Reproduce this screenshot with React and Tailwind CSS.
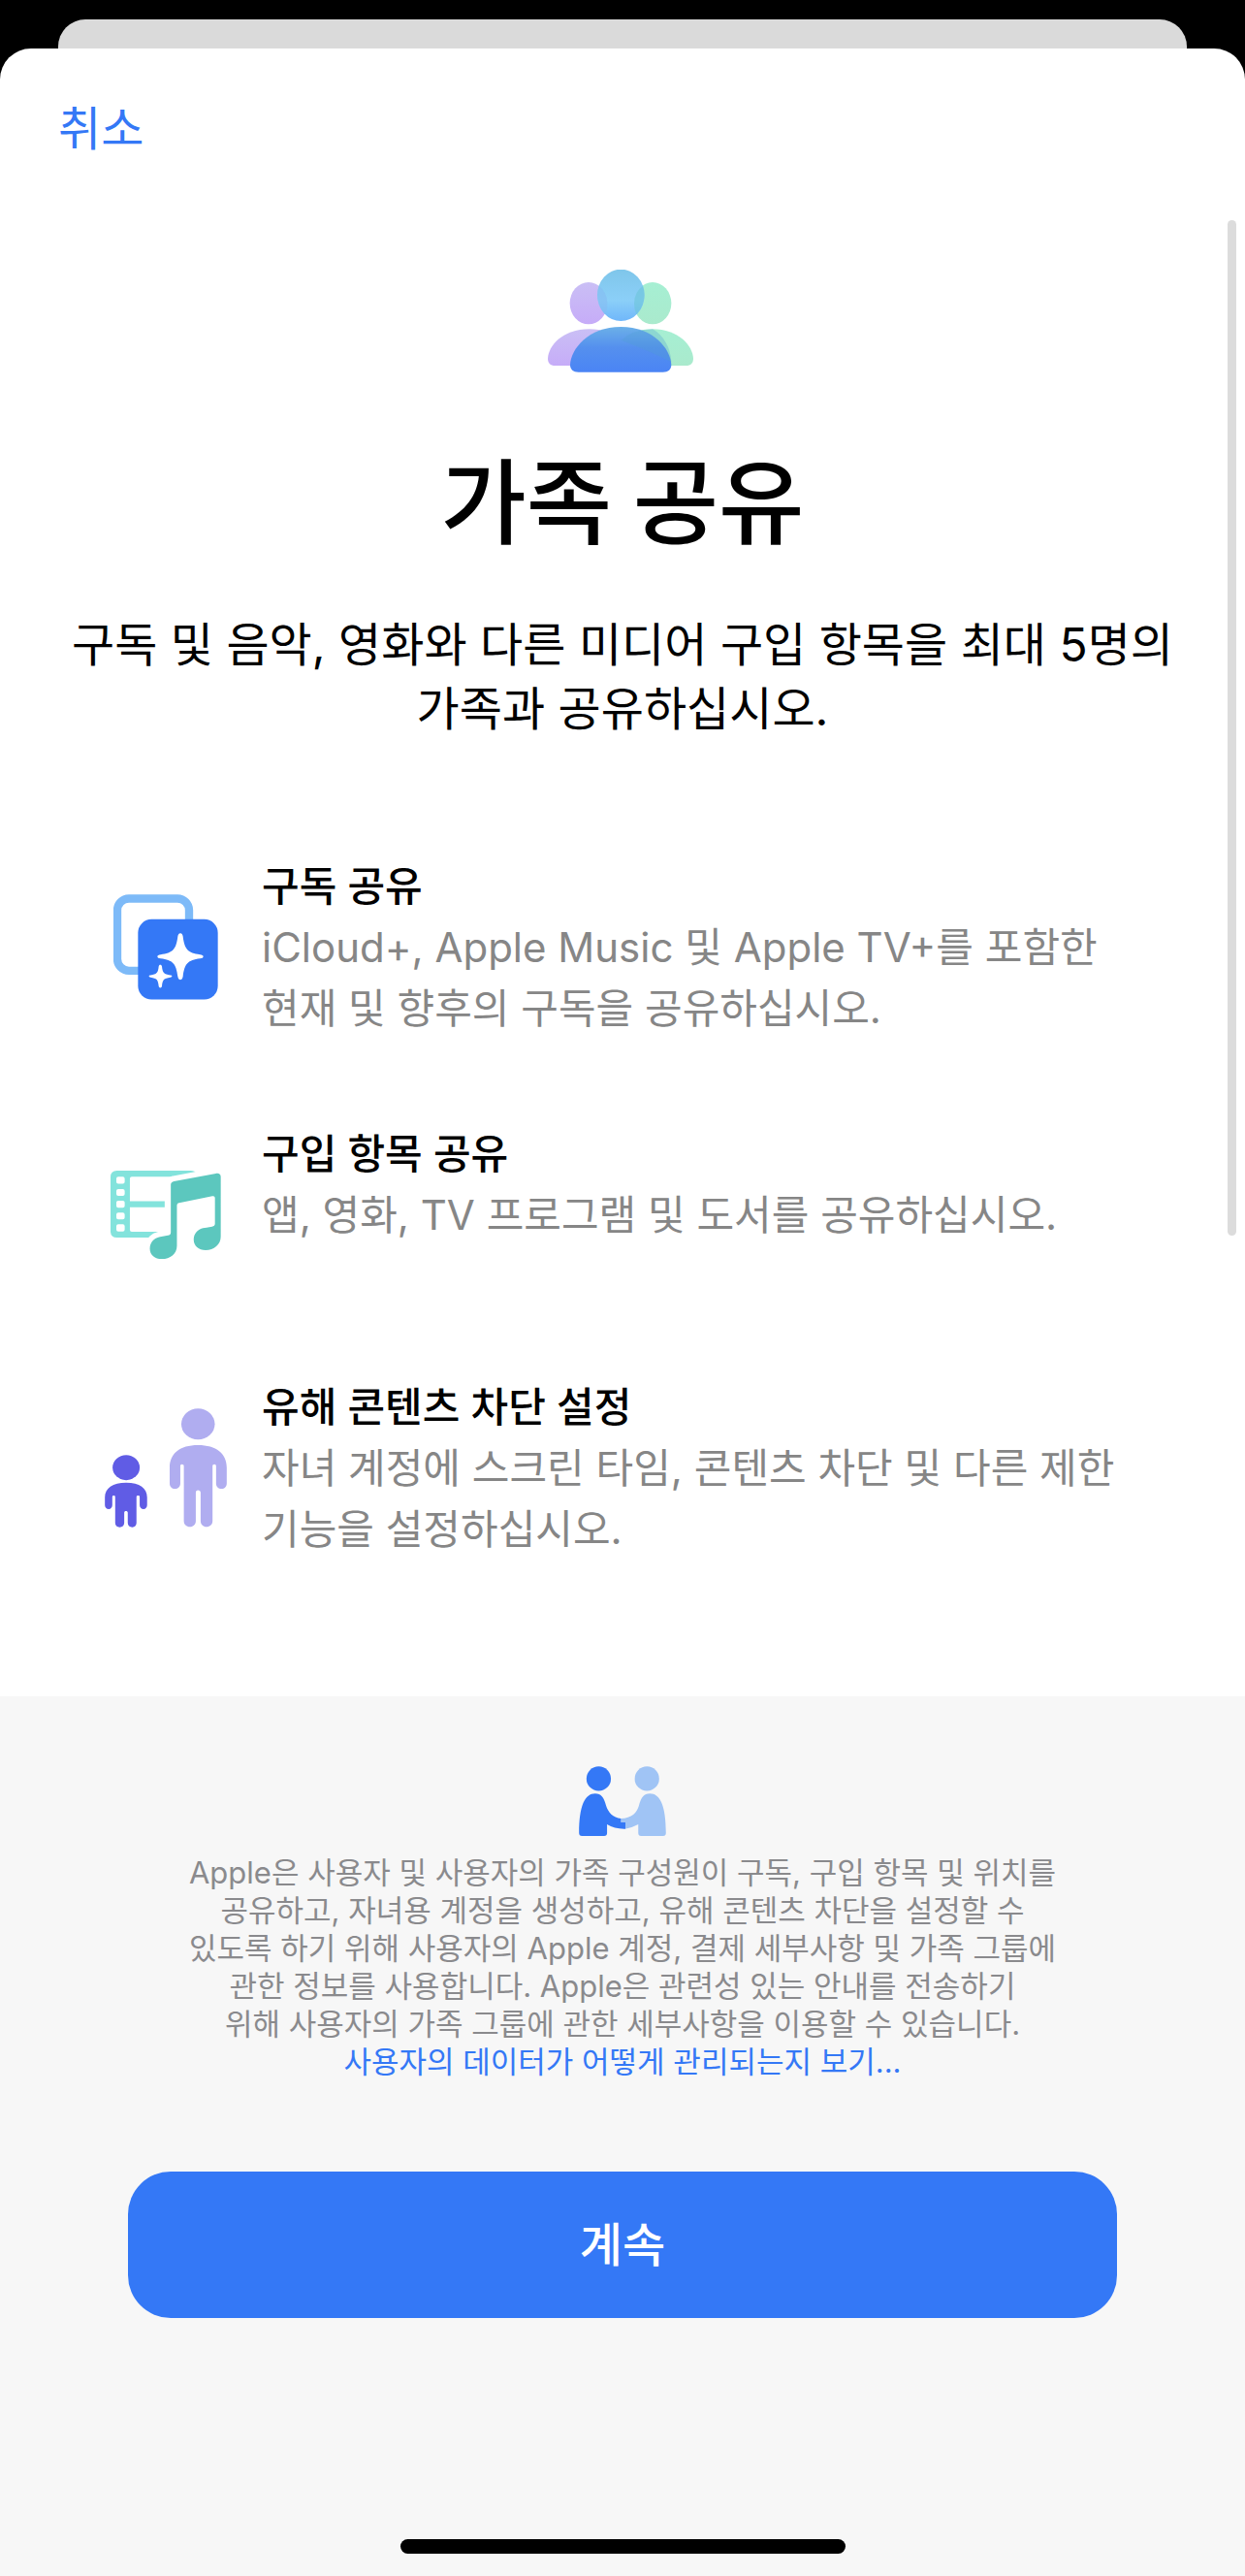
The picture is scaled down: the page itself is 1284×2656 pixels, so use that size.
function FamilyIcon() {
  return (
    <svg viewBox="75 54 462 318" className="h-[106px] w-[154px]" aria-hidden="true">
      <defs>
        <linearGradient id="purple" x1="0" y1="0" x2="0" y2="1">
          <stop offset="0" stopColor="#cabff5" />
          <stop offset="1" stopColor="#c6acf8" />
        </linearGradient>
        <linearGradient id="green" x1="0" y1="0" x2="0" y2="1">
          <stop offset="0" stopColor="#a6efd3" />
          <stop offset="1" stopColor="#aaeacd" />
        </linearGradient>
        <linearGradient id="head" x1="0" y1="0" x2="0" y2="1">
          <stop offset="0" stopColor="#7fc6ea" />
          <stop offset="0.6" stopColor="#8bcff8" />
          <stop offset="1" stopColor="#70b7fa" />
        </linearGradient>
        <linearGradient id="torso" x1="0" y1="0" x2="0" y2="1">
          <stop offset="0" stopColor="#6bb0e8" />
          <stop offset="0.45" stopColor="#5590ee" />
          <stop offset="1" stopColor="#4a84f5" />
        </linearGradient>
      </defs>
      <ellipse cx="201" cy="158" rx="58" ry="65" fill="url(#purple)" />
      <ellipse cx="399" cy="158" rx="58" ry="65" fill="url(#green)" />
      <path d="M98 351C82 351 75 342 75 329C77 290 120 238 203 238C286 238 328 292 330 329C330 342 322 351 307 351Z" fill="url(#purple)" />
      <path d="M502 351C518 351 525 342 525 329C523 290 480 238 399 238C316 238 274 292 272 329C272 342 280 351 295 351Z" fill="url(#green)" />
      <ellipse cx="301" cy="133" rx="73" ry="80" fill="url(#head)" />
      <path d="M342 158A58 65 0 0 1 369 104A73 80 0 0 1 349 192A58 65 0 0 1 342 158Z" fill="#6cc4d8" fillOpacity="0.6" />
      <path d="M259 158A58 65 0 0 0 233 104A73 80 0 0 0 253 192A58 65 0 0 0 259 158Z" fill="#86bdf2" fillOpacity="0.6" />
      <path d="M170 371C153 371 144 363 144 348C146 300 200 231 301 231C402 231 455 300 457 348C457 363 448 371 431 371Z" fill="url(#torso)" />
      <path d="M302 272Q335 241 399 238Q425 252 440 280Q455 305 457 340Q400 310 302 272Z" fill="#4f9fd0" fillOpacity="0.3" />
    </svg>
  );
}

function SubscriptionIcon() {
  return (
    <svg viewBox="82 128 324 326" className="h-[109px] w-[108px]" aria-hidden="true">
      <rect x="94" y="141" width="222" height="223" rx="36" fill="none" stroke="#7dbaf8" strokeWidth="25" />
      <rect x="158" y="205" width="247" height="248" rx="42" fill="#3478f6" />
      <path d="M289 248C294 248 296 252 297 258C302 298 312 309 350 314C356 315 360 316 360 320C360 324 356 325 350 326C312 331 302 342 297 382C296 388 294 392 289 392C284 392 282 388 281 382C276 342 266 331 228 326C222 325 218 324 218 320C218 316 222 315 228 314C266 309 276 298 281 258C282 252 284 248 289 248Z" fill="#fff" />
      <path d="M227 346C230 346 231 348 232 351C234 371 238 375 258 378C261 378 263 379 263 381C263 383 261 384 258 385C238 388 234 392 232 412C231 415 230 417 227 417C224 417 223 415 222 412C220 392 216 388 197 385C194 384 192 383 192 381C192 379 194 378 197 378C216 375 220 371 222 351C223 348 224 346 227 346Z" fill="#fff" />
    </svg>
  );
}

function PurchaseIcon() {
  const note =
    "M259 184C259 178 263 175 269 173L399 149C408 147 414 151 414 159V345C414 370 393 387 367 387C346 387 330 374 330 354C330 332 347 318 370 317L387 314C393 313 396 310 396 305V225C396 220 393 218 388 219L285 240C280 241 278 244 278 249V373C278 398 257 414 231 414C210 414 194 402 194 382C194 360 211 346 234 344L250 341C256 340 259 338 259 332Z";
  return (
    <svg viewBox="72 138 343 278" className="h-[93px] w-[114px]" aria-hidden="true">
      <path
        fillRule="evenodd"
        fill="#83e3dc"
        d="M92 140H320Q334 140 340 150L270 166V159H138Q132 159 132 165V235H240V254H132V324Q132 330 138 330H240V341L210 348H92Q72 348 72 328V160Q72 140 92 140ZM96 159Q90 159 90 165V175Q90 181 96 181H110Q116 181 116 175V165Q116 159 110 159ZM96 197Q90 197 90 203V212Q90 218 96 218H110Q116 218 116 212V203Q116 197 110 197ZM96 233Q90 233 90 239V249Q90 255 96 255H110Q116 255 116 249V239Q116 233 110 233ZM96 270Q90 270 90 276V285Q90 291 96 291H110Q116 291 116 285V276Q116 270 110 270ZM96 306Q90 306 90 312V323Q90 329 96 329H110Q116 329 116 323V312Q116 306 110 306Z"
      />
      <path d={note} fill="#fff" stroke="#fff" strokeWidth="34" strokeLinejoin="round" />
      <path d={note} fill="#5cc7be" />
    </svg>
  );
}

function ParentalIcon() {
  return (
    <svg viewBox="54 98 378 370" className="h-[123px] w-[126px]" aria-hidden="true">
      <g fill="#b0adf0">
        <ellipse cx="343" cy="147" rx="52" ry="48" />
        <path d="M343 212C400 212 432 238 432 282V331C432 341 425 348 416 348C406 348 399 341 399 331V278C399 274 397 272 394 272C390 272 388 274 388 278V448C388 459 380 466 369 466C359 466 351 459 351 448V360C351 355 348 352 343 352C338 352 336 355 336 360V448C336 459 328 466 318 466C307 466 299 459 299 448V278C299 274 297 272 293 272C290 272 288 274 288 278V331C288 341 281 348 271 348C262 348 255 341 255 331V282C255 238 286 212 343 212Z" />
      </g>
      <g fill="#605ce5">
        <ellipse cx="120" cy="282" rx="42" ry="39" />
        <path d="M120 329C162 329 185 346 185 374V399C185 406 180 411 174 411C167 411 162 406 162 399V373C162 370 160 369 157 369C154 369 152 370 152 374V454C152 462 146 467 139 467C131 467 125 462 125 454V422C125 419 123 417 119 417C116 417 114 419 114 422V454C114 462 108 467 100 467C92 467 86 462 86 454V374C86 370 84 369 82 369C79 369 77 370 77 373V399C77 406 72 411 66 411C59 411 54 406 54 399V374C54 346 78 329 120 329Z" />
      </g>
    </svg>
  );
}

function HandshakeIcon() {
  return (
    <svg viewBox="111 62 270 217" className="h-[72px] w-[90px]" aria-hidden="true">
      <g fill="#a0c4f5">
        <circle cx="322" cy="101" r="38" />
        <path d="M331 147C363 147 381 185 381 270Q381 279 372 279H304Q295 279 295 270V243Q275 254 254 257V237H241V225C275 224 291 206 297 185C303 160 312 147 331 147Z" />
      </g>
      <g fill="#3478f6">
        <circle cx="172" cy="101" r="38" />
        <path d="M161 147C129 147 111 185 111 270Q111 279 120 279H189Q198 279 198 270V243Q222 258 255 257V237H241V225C217 222 201 206 195 185C189 160 180 147 161 147Z" />
      </g>
    </svg>
  );
}

const features = [
  {
    Icon: SubscriptionIcon,
    title: "구독 공유",
    text: "iCloud+, Apple Music 및 Apple TV+를 포함한 현재 및 향후의 구독을 공유하십시오.",
  },
  {
    Icon: PurchaseIcon,
    title: "구입 항목 공유",
    text: "앱, 영화, TV 프로그램 및 도서를 공유하십시오.",
  },
  {
    Icon: ParentalIcon,
    title: "유해 콘텐츠 차단 설정",
    text: "자녀 계정에 스크린 타임, 콘텐츠 차단 및 다른 제한 기능을 설정하십시오.",
  },
];

export default function App() {
  return (
    <div className="flex min-h-screen flex-col bg-black pt-5 font-[Inter,'Noto_Sans_CJK_KR',sans-serif] break-keep text-black">
      <div className="mx-[60px] h-[30px] rounded-t-[28px] bg-[#dadada]" />
      <main className="relative flex grow flex-col overflow-hidden rounded-t-[32px] bg-white">
        <div className="absolute top-[177px] right-[9px] h-[1047px] w-[9px] rounded-full bg-[#dcdcdc]" />

        <header className="px-[60px] pt-12">
          <button type="button" className="text-5xl leading-[70px] text-[#3478f6]">
            취소
          </button>
        </header>

        <section className="flex flex-col items-center px-[60px] pt-[110px] text-center">
          <FamilyIcon />
          <h1 className="mt-[68px] font-['Noto_Sans_CJK_KR',sans-serif] text-8xl leading-[120px] font-medium">
            가족 공유
          </h1>
          <p className="mt-[60px] text-5xl leading-[66px]">
            구독 및 음악, 영화와 다른 미디어 구입 항목을 최대 5명의 가족과 공유하십시오.
          </p>
        </section>

        <ul className="flex flex-col gap-[72px] pt-[118px] pr-[100px] pb-[141px] pl-[100px]">
          {features.map(({ Icon, title, text }) => (
            <li key={title} className="flex min-h-[189px] items-center gap-[28px] first:mb-[15px]">
              <div className="flex w-[142px] shrink-0 justify-center">
                <Icon />
              </div>
              <div className="grow self-start text-[42px] leading-[63px]">
                <h2 className="font-medium">{title}</h2>
                <p className="text-[#868686]">{text}</p>
              </div>
            </li>
          ))}
        </ul>

        <footer className="flex grow flex-col items-center bg-[#f7f7f7] px-[132px] pt-[72px] pb-[23px]">
          <HandshakeIcon />
          <p className="mt-[18px] text-center text-[31px] leading-[39px] text-[#8a8a8d]">
            Apple은 사용자 및 사용자의 가족 구성원이 구독, 구입 항목 및 위치를
            <br />
            공유하고, 자녀용 계정을 생성하고, 유해 콘텐츠 차단을 설정할 수
            <br />
            있도록 하기 위해 사용자의 Apple 계정, 결제 세부사항 및 가족 그룹에
            <br />
            관한 정보를 사용합니다. Apple은 관련성 있는 안내를 전송하기
            <br />
            위해 사용자의 가족 그룹에 관한 세부사항을 이용할 수 있습니다.
            <br />
            <a href="#privacy" className="text-[#3478f6]">
              사용자의 데이터가 어떻게 관리되는지 보기...
            </a>
          </p>
          <button
            type="button"
            className="mt-[94px] h-[151px] w-full rounded-[44px] bg-[#3478f6] text-5xl font-medium text-white"
          >
            계속
          </button>
          <div className="mt-auto h-[15px] w-[459px] rounded-full bg-black" />
        </footer>
      </main>
    </div>
  );
}
